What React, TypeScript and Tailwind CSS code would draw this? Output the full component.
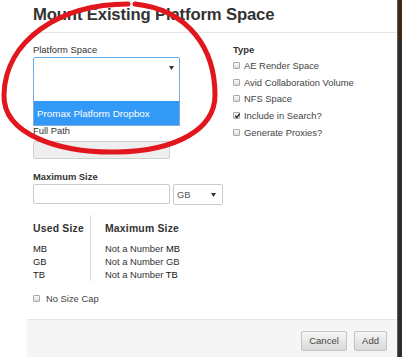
import React from "react";

const font = { fontFamily: '"Liberation Sans", Arial, sans-serif' };

function Caret() {
  return (
    <svg width="5" height="4" viewBox="0 0 5 4" className="shrink-0">
      <path d="M0 0 L5 0 L2.5 4 Z" fill="#333" />
    </svg>
  );
}

function Box({ checked = false }: { checked?: boolean }) {
  return (
    <span className="relative flex h-[7px] w-[7px] shrink-0 items-center justify-center rounded-[1px] border border-[#a9a9a9] bg-gradient-to-b from-[#fcfcfc] to-[#dcdcdc]">
      {checked && (
        <svg width="7" height="7" viewBox="0 0 7 7" className="absolute -top-[1px] left-0">
          <path d="M1.2 3.8 L2.8 5.4 L5.8 1.6" stroke="#222" strokeWidth="1.3" fill="none" />
        </svg>
      )}
    </span>
  );
}

const types = [
  { label: "AE Render Space", checked: false },
  { label: "Avid Collaboration Volume", checked: false },
  { label: "NFS Space", checked: false },
  { label: "Include in Search?", checked: true },
  { label: "Generate Proxies?", checked: false },
];

export default function App() {
  return (
    <div className="relative flex h-[357px] w-[402px] overflow-hidden bg-white text-[#333]" style={font}>
      <div className="w-[27px] shrink-0 bg-white" />

      {/* Modal */}
      <div className="flex w-[370px] shrink-0 flex-col bg-white">
        <div className="h-[33px] shrink-0 border-b border-[#e5e5e5] px-[6px] pt-[5px]">
          <h3 className="text-[16.7px] font-bold leading-[20px] tracking-[-0.15px] text-[#333]">
            Mount Existing Platform Space
          </h3>
        </div>

        <div className="flex flex-1 px-[6px] text-[9.4px] leading-[13px]">
          {/* Left column */}
          <div className="flex w-[147px] shrink-0 flex-col">
            <div className="relative mt-[10px]">
              <div>Platform Space</div>
              <div className="mt-[1px] flex h-[21px] items-center justify-end rounded-[2px] border border-[#66afe9] bg-white pr-[5px]">
                <Caret />
              </div>
              {/* open dropdown */}
              <div className="absolute left-0 top-[34px] z-10 flex w-[147px] flex-col border border-t-0 border-[#7fa9df] bg-white">
                <div className="h-[24px]" />
                <div className="flex h-[24px] items-center bg-[#3399f7] px-[3px] text-[9.8px] text-white">
                  Promax Platform Dropbox
                </div>
              </div>
            </div>

            <div className="mt-[46px]">Full Path</div>
            <div className="mt-[4px] h-[18px] w-[137px] rounded-[2px] border border-[#cfcfcf] bg-[#eeeeee]" />

            <div className="mt-[11px] font-bold">Maximum Size</div>
            <div className="mt-[1px] flex w-[190px] gap-[3px]">
              <div className="h-[20px] w-[137px] rounded-[2px] border border-[#cccccc] bg-white" />
              <div className="flex h-[21px] w-[50px] items-center justify-between rounded-[2px] border border-[#cccccc] bg-white pl-[3px] pr-[6px] text-[#555]">
                <span>GB</span>
                <Caret />
              </div>
            </div>

            <div className="mt-[10px] flex w-[200px]">
              <div className="w-[58px] shrink-0 border-r border-[#dddddd] pt-[7px] pb-0">
                <div className="text-[10.4px] font-bold tracking-[0.2px]">Used Size</div>
                <div className="mt-[7px] text-[#222]">MB</div>
                <div className="text-[#222]">GB</div>
                <div className="text-[#222]">TB</div>
              </div>
              <div className="pl-[14px] pt-[7px]">
                <div className="text-[10.4px] font-bold tracking-[0.2px]">Maximum Size</div>
                <div className="mt-[7px]">
                  Not a Number <span className="text-[#111]">MB</span>
                </div>
                <div>Not a Number GB</div>
                <div>
                  Not a Number <span className="text-[#111]">TB</span>
                </div>
              </div>
            </div>

            <div className="mt-[11px] flex items-center gap-[6px] text-[#444]">
              <Box />
              <span>No Size Cap</span>
            </div>
          </div>

          {/* Right column */}
          <div className="ml-[53px] mt-[10px] flex flex-col">
            <div className="font-bold">Type</div>
            <div className="mt-[1px] flex flex-col">
              {types.map((t) => (
                <div key={t.label} className="flex h-[16.75px] items-center gap-[4px] text-[#444]">
                  <Box checked={t.checked} />
                  <span>{t.label}</span>
                </div>
              ))}
            </div>
          </div>
        </div>

        {/* Footer */}
        <div className="flex h-[38px] shrink-0 items-start justify-end gap-[7px] border-t border-[#e5e5e5] bg-[#f5f5f5] pr-[10px] pt-[11px]">
          <button className="h-[20px] w-[46px] rounded-[2px] border border-[#c4c4c4] bg-gradient-to-b from-[#f6f6f6] to-[#d9d9d9] text-[9.5px] text-[#444]">
            Cancel
          </button>
          <button className="h-[20px] w-[33px] rounded-[2px] border border-[#c4c4c4] bg-gradient-to-b from-[#f6f6f6] to-[#d9d9d9] text-[9.5px] text-[#444]">
            Add
          </button>
        </div>
      </div>

      {/* Dark edge of the window behind */}
      <div className="flex w-[5px] shrink-0 flex-col border-l border-[#5a5a5a]">
        <div className="h-[42px] bg-[#3a2a12]" />
        <div className="flex-1 bg-[#2e2e2e]" />
      </div>

      {/* Hand-drawn red annotation */}
      <svg
        className="pointer-events-none absolute left-0 top-0 z-20"
        width="402"
        height="357"
        viewBox="0 0 402 357"
      >
        <path
          d="M128 4 C60 4, 5 40, 4 95 C3 135, 60 153, 117 152 C175 151, 215 130, 215 95 C215 50, 190 10, 135 4"
          fill="none"
          stroke="#e2161d"
          strokeWidth="5"
          strokeLinecap="round"
        />
      </svg>
    </div>
  );
}
